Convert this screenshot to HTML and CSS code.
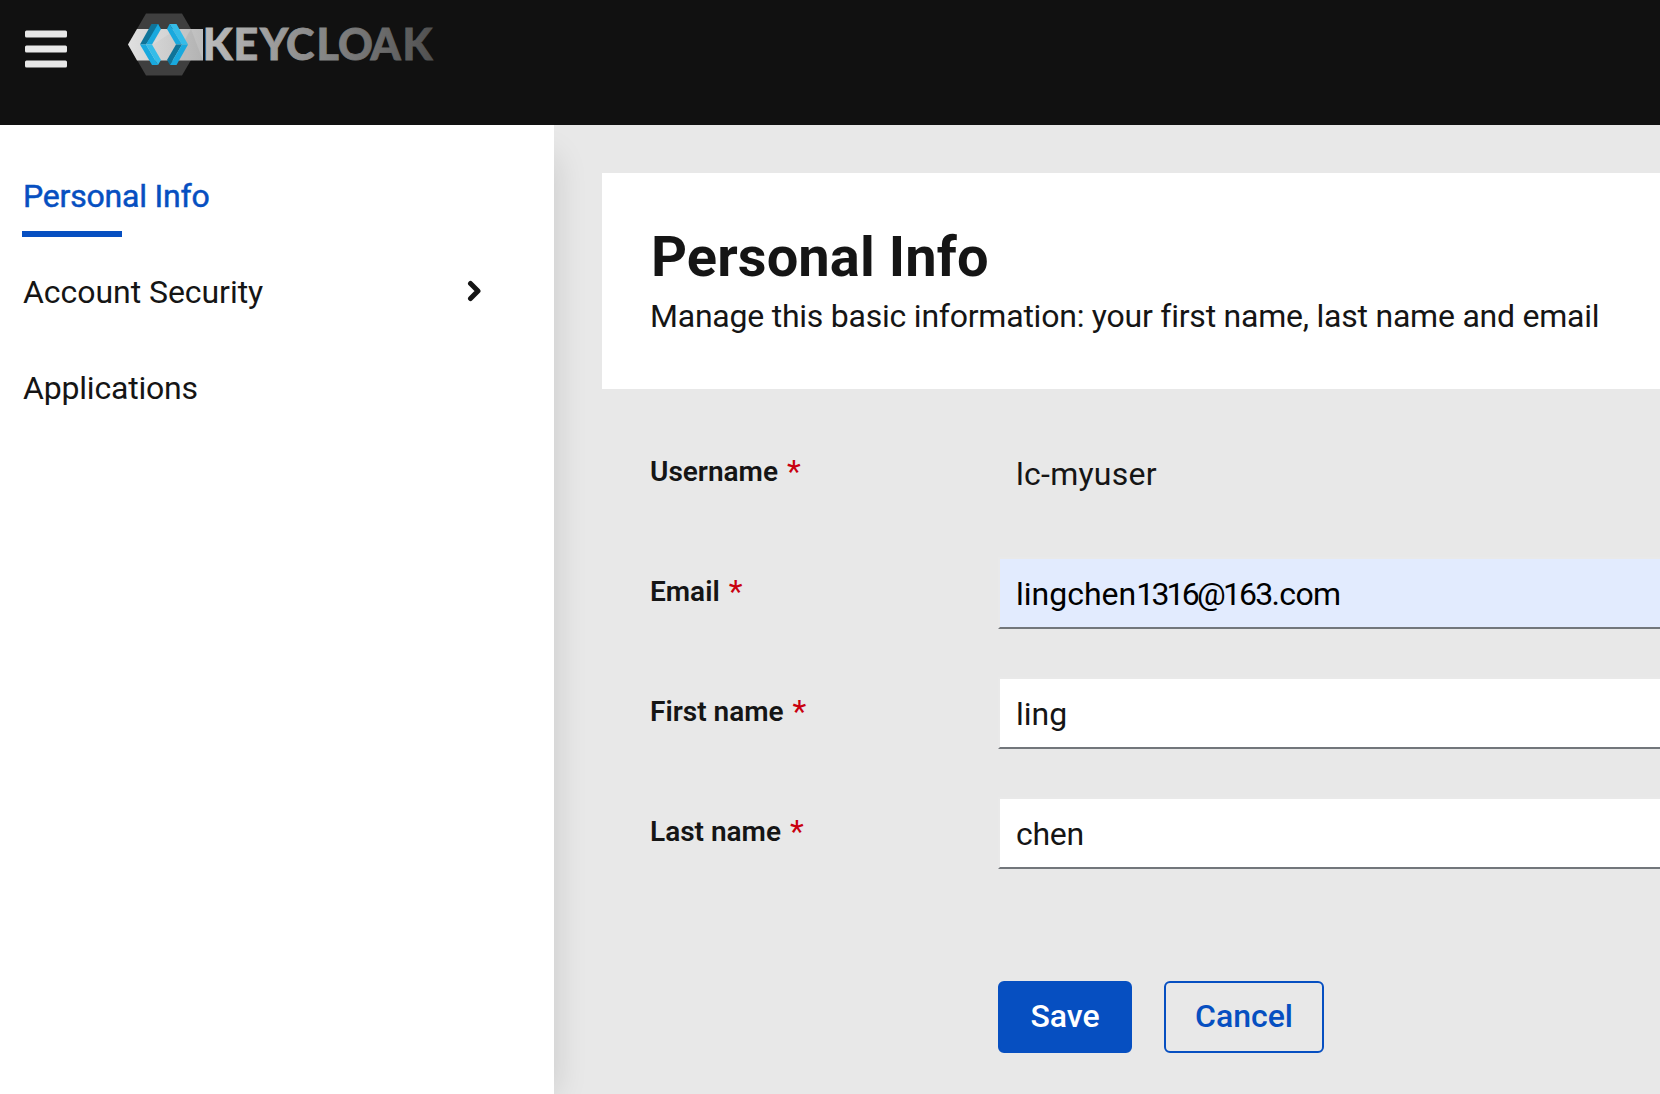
FILE: index.html
```html
<!DOCTYPE html>
<html lang="en">
<head>
<meta charset="utf-8">
<title>Keycloak Account Management</title>
<link rel="stylesheet" href="styles.css">
</head>
<body>
<header class="masthead">
  <button class="menu-toggle" type="button" aria-label="Toggle navigation">
    <svg width="42" height="37" viewBox="0 0 42 37" fill="#e8e8e8"><rect y="0.5" width="42" height="7" rx="1.5"/><rect y="15.5" width="42" height="7" rx="1.5"/><rect y="30.5" width="42" height="7" rx="1.5"/></svg>
  </button>
  <svg class="logo" width="310" height="64" viewBox="126 12 310 64" role="img" aria-label="Keycloak">
    <defs>
      <linearGradient id="metal" gradientUnits="userSpaceOnUse" x1="128" y1="0" x2="433" y2="0">
        <stop offset="0" stop-color="#e0e0e0"/><stop offset=".25" stop-color="#bcbcbc"/><stop offset=".5" stop-color="#999"/><stop offset=".8" stop-color="#707070"/><stop offset="1" stop-color="#505050"/>
      </linearGradient>
    </defs>
    <path fill="#3f3f3f" d="M146 13.500h36l18 31-18 31h-36l-18-31z"/>
    <path fill="url(#metal)" d="M137 29h66v31.500h-66l-9-16z"/>
    <path fill="#fff" opacity=".15" d="M161 29h16l-24 15.500z"/>
    <path fill="#000" opacity=".05" d="M191 29l12 31.500h-30z"/>
    <path fill="#0f7499" d="M151.500 24h7v2l-12.500 18.500h-6z"/>
    <path fill="#19a9de" d="M158 24l3 5-9 15.500h-6z"/>
    <path fill="#19a9de" d="M140 44.500h6l12 20.500h-6z"/>
    <path fill="#35bce8" d="M146 44.500h6l9 15.500-3 5z"/>
    <path fill="#35bce8" d="M169.500 24h7l11.500 20.500h-6z"/>
    <path fill="#19a9de" d="M169.500 24l12.500 20.500h-6l-9-15.500z"/>
    <path fill="#0f7499" d="M176 44.500h6l-12 20.500-3-5z"/>
    <path fill="#19a9de" d="M182 44.500h6l-11.500 20.500h-6.500z"/>
    <text class="wordmark" fill="url(#metal)" stroke="url(#metal)" x="202.800 233.500 260 286 316.500 338 370.500 402.500" y="60.200">KEYCLOAK</text>
  </svg>
</header>
<div class="page">
  <nav class="sidebar">
    <a class="nav-link current"><span class="t-personal">Personal Info</span></a>
    <a class="nav-link"><span class="t-security">Account Security</span>
      <svg width="14" height="22" viewBox="0 0 14 22" fill="none" stroke="#151515" stroke-width="5" stroke-linecap="round" stroke-linejoin="round"><path d="M3.500 3.500l7.500 7.500-7.500 7.500"/></svg>
    </a>
    <a class="nav-link"><span class="t-apps">Applications</span></a>
  </nav>
  <main class="content">
    <section class="intro">
      <h1>Personal Info</h1>
      <p>Manage this basic information: your first name, last name and email</p>
    </section>
    <form class="form">
      <div class="row"><label><span>Username</span><i>*</i></label><div class="field plain"><span class="t-user">lc-myuser</span></div></div>
      <div class="row"><label><span>Email</span><i>*</i></label><div class="field autofill"><span>lingchen</span><span class="t-digits">1316@</span><span class="t-number">163</span><span class="t-domain">.com</span></div></div>
      <div class="row"><label><span>First name</span><i>*</i></label><div class="field"><span>ling</span></div></div>
      <div class="row"><label><span>Last name</span><i>*</i></label><div class="field"><span class="t-chen">chen</span></div></div>
      <div class="actions"><button class="btn save" type="button">Save</button><button class="btn cancel" type="button">Cancel</button></div>
    </form>
  </main>
</div>
</body>
</html>
```
FILE: styles.css
```css
* { box-sizing: border-box; }
body { margin: 0; width: 1660px; height: 1094px; overflow: hidden; display: flex; flex-direction: column; font: 400 32px/48px Roboto, sans-serif; color: #151515; background: #e8e8e8; }
button { font: inherit; margin: 0; padding: 0; border: 0; background: none; }
.masthead { height: 125px; flex: none; background: #111; display: flex; align-items: flex-start; padding: 12px 25px; gap: 59px; }
.menu-toggle { width: 42px; height: 38px; margin-top: 18px; display: flex; }
.menu-toggle svg { overflow: visible; }
.logo { display: block; }
.wordmark { font: 900 43px Lato, sans-serif; stroke-width: .8px; }
.page { flex: 1; display: flex; min-height: 0; }
.sidebar { width: 554px; flex: none; background: #fff; padding: 24px 73px 0 22px; box-shadow: 16px 16px 32px -16px rgba(3,3,3,.14); clip-path: inset(0 -60px 0 0); z-index: 1; }
.nav-link { height: 96px; display: flex; align-items: center; justify-content: space-between; padding: 0 0 3px 1px; }
.nav-link svg { margin-bottom: 2px; }
.current { color: #064fc1; background: linear-gradient(#064fc1, #064fc1) 0 82px / 100px 6px no-repeat; -webkit-text-stroke: .5px #064fc1; }
.t-personal, .t-apps { letter-spacing: -.2px; }
.t-security { letter-spacing: -.05px; }
.content { flex: 1; min-width: 0; padding: 48px 0 0 48px; }
.intro { height: 216px; background: #fff; padding: 48px 0 0 48px; }
h1 { margin: 0; padding-left: 1px; height: 71px; font-size: 56px; line-height: 72px; font-weight: 700; letter-spacing: .1px; }
p { margin: 0; white-space: nowrap; letter-spacing: -.23px; }
.form { padding: 48px 0 0 48px; }
.row { height: 120px; display: grid; grid-template-columns: 348px 1fr; align-items: start; }
label { font-size: 28px; font-weight: 600; line-height: 42px; padding-top: 14px; display: flex; gap: 9px; }
label i { color: #c9000f; font-size: 32px; font-style: normal; font-weight: 400; line-height: 40px; }
.field { height: 72px; border: 2px solid #e9e9e9; border-right: 0; border-bottom-color: #72767b; background: #fff; padding: 11px 16px; }
.plain { background: none; border-color: transparent; }
.autofill { background: #e2ebfe; color: #000; }
.t-user { letter-spacing: .25px; }
.t-digits { letter-spacing: -2.800px; }
.t-number { letter-spacing: -1.800px; }
.t-domain { letter-spacing: -.600px; }
.t-chen { letter-spacing: -.300px; }
.actions { display: flex; gap: 32px; padding: 64px 0 0 348px; }
.btn { height: 72px; border: 2px solid #064fc1; border-radius: 6px; font-weight: 500; line-height: 46px; padding-bottom: 2px; text-align: center; }
.save { width: 134px; background: #064fc1; color: #fff; }
.cancel { width: 160px; color: #064fc1; }
```
